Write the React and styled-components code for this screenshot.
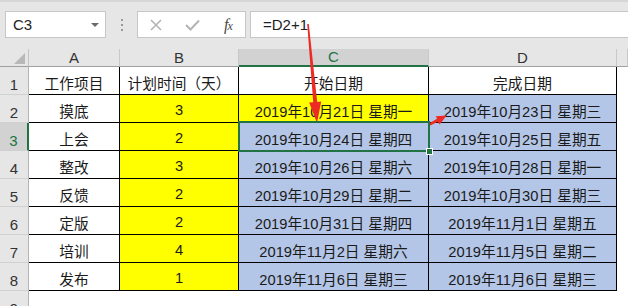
import React from 'react';
import styled, { createGlobalStyle, css } from 'styled-components';

const GlobalStyle = createGlobalStyle`
  html, body { margin: 0; padding: 0; background: #fff; }
  * { box-sizing: border-box; }
`;

const FONT = `"Liberation Sans", "Noto Sans CJK SC", sans-serif`;

const Page = styled.div`
  position: relative;
  width: 628px;
  height: 306px;
  overflow: hidden;
  font-family: ${FONT};
  background: #fff;
`;

const Toolbar = styled.div`
  height: 49px;
  display: flex;
  align-items: flex-start;
  padding-top: 11px;
  background: #e6e6e6;
  border-top: 2px solid #d6d6d6;
`;

const Box = styled.div`
  height: 27px;
  background: #fff;
  border: 1px solid #c6c6c6;
  display: flex;
  align-items: center;
  margin-top: -2px;
`;

const NameBox = styled(Box)`
  margin-left: 5px;
  width: 101px;
  padding: 0 6px 0 7px;
  justify-content: space-between;
  font-size: 15px;
  color: #222;
`;

const DropCaret = styled.span`
  width: 0;
  height: 0;
  border-left: 4px solid transparent;
  border-right: 4px solid transparent;
  border-top: 4px solid #6a6a6a;
`;

const Splitter = styled.div`
  width: 31px;
  height: 27px;
  margin-top: -2px;
  display: flex;
  flex-direction: column;
  align-items: center;
  justify-content: center;
  gap: 3px;
`;

const Dot = styled.span`
  width: 2px;
  height: 2px;
  background: #9a9a9a;
`;

const FxBox = styled(Box)`
  width: 109px;
  display: grid;
  grid-template-columns: repeat(3, 36px);
  justify-items: center;
`;

const FxText = styled.span`
  font-family: "Liberation Serif", serif;
  font-style: italic;
  font-size: 16px;
  color: #4a4a4a;
  letter-spacing: -1px;
  small { font-size: 12px; }
`;

const FormulaInput = styled(Box)`
  flex: 1;
  margin-left: 4px;
  border-right: none;
  padding-left: 12px;
  font-size: 15px;
  color: #222;
`;

const Sheet = styled.div`
  display: grid;
  grid-template-columns: 29px 91px 119px 190px 188px 1fr;
  grid-template-rows: 18px repeat(9, 28px);
`;

const Corner = styled.div`
  position: relative;
  background: #e6e6e6;
  border-right: 1px solid #c4c4c4;
  border-bottom: 1px solid #9f9f9f;
  &::after {
    content: '';
    position: absolute;
    right: 3px;
    bottom: 2px;
    width: 0;
    height: 0;
    border-left: 11px solid transparent;
    border-bottom: 11px solid #b8b8b8;
  }
`;

const ColHead = styled.div`
  display: flex;
  align-items: flex-end;
  justify-content: center;
  font-size: 15px;
  line-height: 17px;
  color: #333;
  background: #e6e6e6;
  border-right: 1px solid #c8c8c8;
  border-bottom: 1px solid #9f9f9f;
  ${p => p.$active && css`
    background: #d2d2d2;
    color: #217346;
    border-bottom: 2px solid #217346;
  `}
`;

const RowHead = styled.div`
  display: flex;
  align-items: flex-end;
  justify-content: center;
  padding-bottom: 1px;
  font-size: 15px;
  color: #333;
  background: #e6e6e6;
  border-right: 1px solid #b4b4b4;
  border-bottom: 1px solid #d0d0d0;
  ${p => p.$active && css`
    background: #d2d2d2;
    color: #217346;
    border-right: 2px solid #217346;
  `}
`;

const fills = { white: '#ffffff', yellow: '#ffff00', blue: '#b4c6e7' };

const Cell = styled.div`
  position: relative;
  display: flex;
  align-items: center;
  justify-content: center;
  padding-top: 3px;
  font-size: 14.7px;
  color: #1a1a1a;
  white-space: nowrap;
  background: ${p => fills[p.$fill || 'white']};
  border-right: 1px solid #000;
  border-bottom: 1px solid #000;
  ${p => p.$selected && css`
    z-index: 2;
    &::after {
      content: '';
      position: absolute;
      top: -2px;
      left: -1px;
      right: -2px;
      bottom: -2px;
      border: 2px solid #217346;
    }
  `}
`;

const FillHandle = styled.span`
  position: absolute;
  right: -5px;
  bottom: -5px;
  width: 7px;
  height: 7px;
  background: #217346;
  border: 1px solid #fff;
  z-index: 3;
`;

const Blank = styled.div`
  background: #fff;
`;

const Arrows = styled.svg`
  position: absolute;
  left: 0;
  top: 0;
  pointer-events: none;
`;

const rows = [
  ['摸底', '3', '2019年10月21日 星期一', '2019年10月23日 星期三', 'yellow'],
  ['上会', '2', '2019年10月24日 星期四', '2019年10月25日 星期五', 'blue'],
  ['整改', '3', '2019年10月26日 星期六', '2019年10月28日 星期一', 'blue'],
  ['反馈', '2', '2019年10月29日 星期二', '2019年10月30日 星期三', 'blue'],
  ['定版', '2', '2019年10月31日 星期四', '2019年11月1日 星期五', 'blue'],
  ['培训', '4', '2019年11月2日 星期六', '2019年11月5日 星期二', 'blue'],
  ['发布', '1', '2019年11月6日 星期三', '2019年11月6日 星期三', 'blue'],
];

export default function App() {
  return (
    <Page>
      <GlobalStyle />
      <Toolbar>
        <NameBox>
          C3
          <DropCaret />
        </NameBox>
        <Splitter>
          <Dot />
          <Dot />
          <Dot />
        </Splitter>
        <FxBox>
          <svg width="12" height="12" viewBox="0 0 12 12">
            <path d="M1 1 L11 11 M11 1 L1 11" stroke="#b4b4b4" strokeWidth="1.6" fill="none" />
          </svg>
          <svg width="15" height="12" viewBox="0 0 15 12">
            <path d="M1 6 L5.5 10.5 L14 1.5" stroke="#b4b4b4" strokeWidth="2" fill="none" />
          </svg>
          <FxText>f<small>x</small></FxText>
        </FxBox>
        <FormulaInput>=D2+1</FormulaInput>
      </Toolbar>

      <Sheet>
        <Corner />
        <ColHead>A</ColHead>
        <ColHead>B</ColHead>
        <ColHead $active>C</ColHead>
        <ColHead>D</ColHead>
        <ColHead />

        <RowHead>1</RowHead>
        <Cell>工作项目</Cell>
        <Cell>计划时间（天）</Cell>
        <Cell>开始日期</Cell>
        <Cell>完成日期</Cell>
        <Blank />

        {rows.map(([task, days, start, end, startFill], i) => {
          const selected = i === 1;
          return (
            <React.Fragment key={task}>
              <RowHead $active={selected}>{i + 2}</RowHead>
              <Cell>{task}</Cell>
              <Cell $fill="yellow">{days}</Cell>
              <Cell $fill={startFill} $selected={selected}>
                {start}
                {selected && <FillHandle />}
              </Cell>
              <Cell $fill="blue">{end}</Cell>
              <Blank />
            </React.Fragment>
          );
        })}

        <RowHead>9</RowHead>
        <Blank />
        <Blank />
        <Blank />
        <Blank />
        <Blank />
      </Sheet>

      <Arrows width="628" height="306" viewBox="0 0 628 306">
        <polygon
          points="307.2,24 308.8,24 317.2,101.9 321.2,101.5 317,123 309.2,102.6 313.2,102.3"
          fill="#ee2a24"
        />
        <polygon
          points="426.4,125 427.4,127 437.8,121.8 439.6,124.5 446.7,115.6 435.8,116.2 437,118.8"
          fill="#ee2a24"
        />
      </Arrows>
    </Page>
  );
}
